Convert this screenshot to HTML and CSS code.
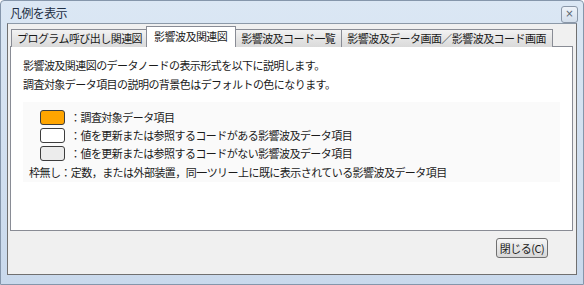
FILE: index.html
```html
<!DOCTYPE html>
<html lang="ja">
<head>
<meta charset="utf-8">
<link rel="stylesheet" href="styles.css">
</head>
<body>
<div class="window">
  <div class="titlebar">
    <span class="title">凡例を表示</span>
    <span class="close">×</span>
  </div>
  <div class="client">
    <div class="tabs">
      <div class="tab">プログラム呼び出し関連図</div>
      <div class="tab active">影響波及関連図</div>
      <div class="tab">影響波及コード一覧</div>
      <div class="tab">影響波及データ画面／影響波及コード画面</div>
    </div>
    <div class="panel">
      <p class="line">影響波及関連図のデータノードの表示形式を以下に説明します。</p>
      <p class="line">調査対象データ項目の説明の背景色はデフォルトの色になります。</p>
      <div class="legend">
        <div class="row"><span class="swatch orange"></span><span>：調査対象データ項目</span></div>
        <div class="row"><span class="swatch white"></span><span>：値を更新または参照するコードがある影響波及データ項目</span></div>
        <div class="row"><span class="swatch gray"></span><span>：値を更新または参照するコードがない影響波及データ項目</span></div>
        <div class="row none">枠無し：定数，または外部装置，同一ツリー上に既に表示されている影響波及データ項目</div>
      </div>
    </div>
    <div class="footer">
      <button class="btn">閉じる(C)</button>
    </div>
  </div>
</div>
</body>
</html>
```
FILE: styles.css
```css
html, body {
  margin: 0;
  padding: 0;
  background: #ffffff;
}
body {
  font-family: "Noto Sans CJK JP", "Noto Sans", sans-serif;
  font-size: 11px;
  color: #1a1a1a;
}
.window {
  box-sizing: border-box;
  width: 584px;
  height: 285px;
  border: 1px solid #8596ab;
  border-radius: 4px 4px 0 0;
  background: linear-gradient(#dbe7f4, #c9d9ec);
  padding: 0 6px 9px 6px;
  display: flex;
  flex-direction: column;
}
.titlebar {
  height: 22px;
  display: flex;
  align-items: center;
  justify-content: space-between;
  padding-left: 3px;
}
.title {
  font-size: 12px;
  color: #1f2f44;
  letter-spacing: -0.6px;
}
.close {
  box-sizing: border-box;
  width: 17px;
  height: 17px;
  margin-top: 4px;
  margin-right: -1px;
  border: 1px solid #8a97a8;
  border-radius: 3px;
  background: linear-gradient(#eef3f9, #d3deeb);
  font-family: "DejaVu Sans", sans-serif;
  font-size: 10px;
  line-height: 14px;
  text-align: center;
  color: #5a6470;
}
.client {
  flex: 1;
  border: 1px solid #707070;
  border-top-color: #8c99a8;
  background: #f0f0f0;
  display: flex;
  flex-direction: column;
  padding: 2px 3px 0 2px;
}
.tabs {
  display: flex;
  align-items: flex-end;
  height: 21px;
  position: relative;
  z-index: 1;
  margin-bottom: -1px;
  padding-left: 1px;
}
.tab {
  box-sizing: border-box;
  height: 18px;
  line-height: 16px;
  padding: 0 6px 0 5px;
  border: 1px solid #898c95;
  border-bottom: none;
  margin-right: -1px;
  background: linear-gradient(#f3f3f3, #e5e5e5 50%, #dadada);
  letter-spacing: -0.55px;
  white-space: nowrap;
}
.tab.active {
  height: 21px;
  line-height: 18px;
  background: #ffffff;
  margin: 0 -1px 0 -2px;
  padding: 0 8px 0 7px;
  position: relative;
  z-index: 2;
}
.panel {
  height: 185px;
  box-sizing: border-box;
  border: 1px solid #898c95;
  background: #ffffff;
  padding: 11px 12px 0 12px;
}
.line {
  margin: 0 0 4px 0;
  line-height: 15px;
  letter-spacing: -0.55px;
}
.legend {
  margin-top: 10px;
  background: #fafafa;
  height: 80px;
  padding: 6px 0 0 6px;
  box-sizing: border-box;
}
.row {
  display: flex;
  align-items: center;
  height: 18px;
  letter-spacing: -0.55px;
}
.row span:last-child {
  margin-left: 5px;
}
.swatch {
  box-sizing: border-box;
  width: 25px;
  height: 15px;
  margin-left: 11px;
  border: 1px solid #3d3d3d;
  border-radius: 3px;
}
.orange { background: #ffa500; }
.white { background: #ffffff; }
.gray { background: #ececec; }
.row.none {
  height: 20px;
}
.footer {
  flex: 1;
  display: flex;
  justify-content: flex-end;
  align-items: flex-start;
  padding: 7px 25px 0 0;
}
.btn {
  box-sizing: border-box;
  width: 52px;
  height: 20px;
  padding: 0;
  border: 1px solid #707070;
  border-radius: 3px;
  background: linear-gradient(#f6f6f6, #e6e6e6 50%, #d8d8d8);
  font-family: "Noto Sans CJK JP", sans-serif;
  font-size: 11px;
  color: #1a1a1a;
  letter-spacing: -0.5px;
  line-height: 16px;
}
```
